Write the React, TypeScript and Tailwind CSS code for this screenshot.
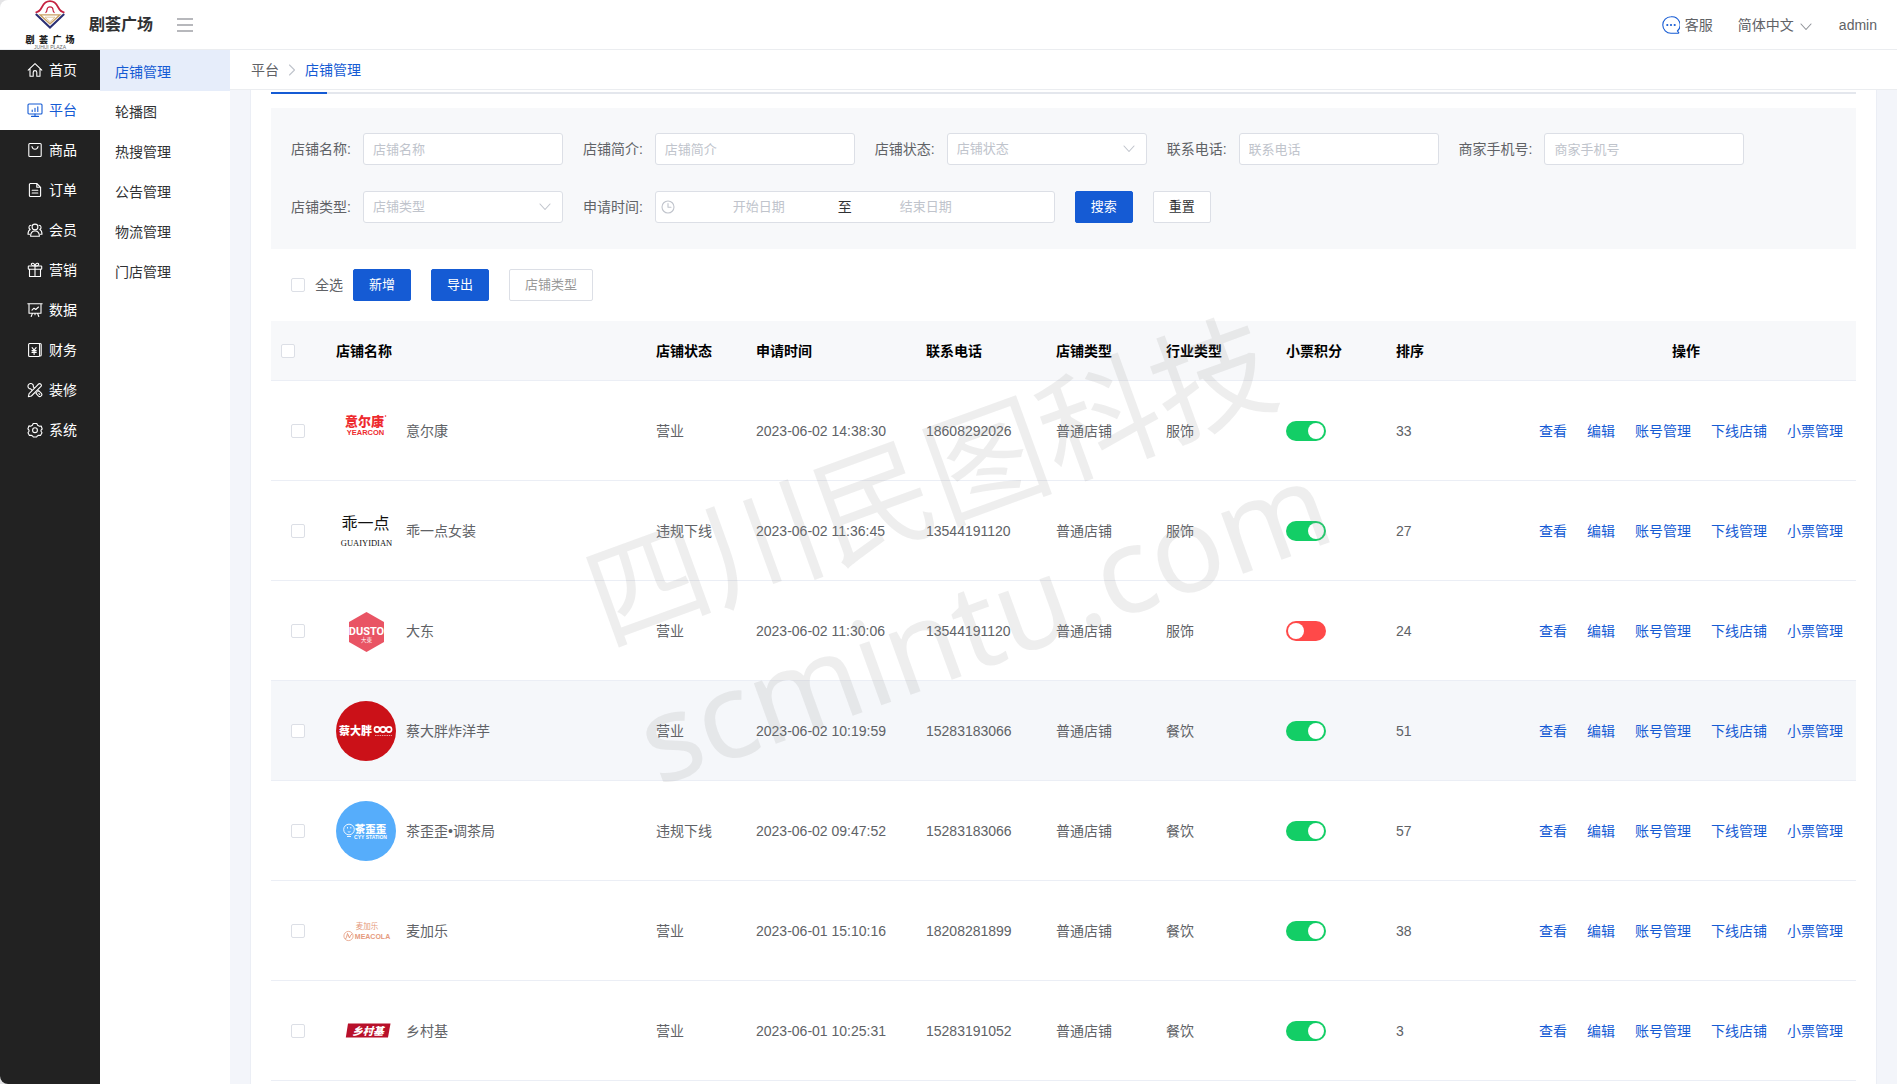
import React from "react";

type IconProps = { className?: string };

const stroke = {
  fill: "none",
  stroke: "currentColor",
  strokeWidth: 1.1,
  strokeLinecap: "round" as const,
  strokeLinejoin: "round" as const,
};

function NavSvg({ children }: { children: React.ReactNode }) {
  return (
    <svg viewBox="0 0 16 16" className="size-4 shrink-0" aria-hidden="true" {...stroke}>
      {children}
    </svg>
  );
}

const HomeIcon = () => (
  <NavSvg>
    <path d="M1.2 8.2 8 1.6l6.8 6.6M3 6.8V14.2h3.2V10.4a1.8 1.8 0 0 1 3.6 0v3.8H13V6.8" />
  </NavSvg>
);
const PlatformIcon = () => (
  <NavSvg>
    <rect x="1" y="2" width="14" height="10" rx="1" />
    <path d="M5.2 9.5V8M8 9.5V6.3M10.8 9.5V4.8M8 12v2.2M4.5 14.4h7" />
  </NavSvg>
);
const GoodsIcon = () => (
  <NavSvg>
    <rect x="1.8" y="1.5" width="12.4" height="13" rx="1" />
    <path d="M5 4.6c.4 1.7 1.6 2.6 3 2.6s2.6-.9 3-2.6" />
  </NavSvg>
);
const OrderIcon = () => (
  <NavSvg>
    <path d="M9.8 1.5H3.4a1 1 0 0 0-1 1v11a1 1 0 0 0 1 1h9.2a1 1 0 0 0 1-1V5.3zM9.8 1.5v3.8h3.8M5.2 8.2h5.6M5.2 11h5.6" />
  </NavSvg>
);
const MemberIcon = () => (
  <NavSvg>
    <circle cx="8" cy="5" r="2.9" />
    <path d="M3.6 14.3c0-3.5 1.8-5.3 4.4-5.3s4.4 1.8 4.4 5.3zM4 3.2a2.2 2.2 0 0 0-.8 4.2C1.6 8.2 1 9.8 1 12.2h1.5M12 3.2a2.2 2.2 0 0 1 .8 4.2c1.6.8 2.2 2.4 2.2 4.8h-1.5" />
  </NavSvg>
);
const GiftIcon = () => (
  <NavSvg>
    <rect x="1.3" y="4" width="13.4" height="3.3" rx=".5" />
    <path d="M2.5 7.3v7.2h11V7.3M8 4v10.500M8 4C6.500 4 4.300 3.400 4.300 2.200 4.300.7 7.500.8 8 4c.5-3.200 3.700-3.300 3.700-1.800C11.700 3.400 9.500 4 8 4" />
  </NavSvg>
);
const DataIcon = () => (
  <NavSvg>
    <path d="M.8 1.8h14.4M2 1.8v9.4h12V1.8M5 8.2l2-2 1.8 1.3L11.5 5M5.5 11.2l-1.3 3.3M10.5 11.2l1.3 3.3M8 11.2v1.5" />
  </NavSvg>
);
const FinanceIcon = () => (
  <NavSvg>
    <rect x="1.6" y="1.5" width="11" height="13" rx="1" />
    <path d="M3 1.5h10.200a1 1 0 0 1 1 1v10.500a1 1 0 0 1-1 1M5.100 5.600l2 2.600 2-2.600M5 8.600h4.200M5 10.400h4.200M7.100 8.400v4" />
  </NavSvg>
);
const DecorIcon = () => (
  <NavSvg>
    <path d="M9.800 3.800 11.600 2a1.400 1.400 0 0 1 2 0l.4.400a1.400 1.400 0 0 1 0 2L4.400 14l-3 .7.7-3zM6.300 4.800A2.700 2.700 0 1 0 3.700 6.900l1 1M6.300 4.800l1 1M9.800 10.500l-.8.900 2.300 2.500a2 2 0 0 0 2.900-2.800l-2.500-2.400-.9.800M11.900 11.700l.7.700" />
  </NavSvg>
);
const SystemIcon = () => (
  <NavSvg>
    <path d="M6.2 1.5h3.600l.8 1.800 1.900.9 1.700-.2 1 3-1.200 1.200 0 1 1 1.500-1.500 2.700-1.900-.2-1.200.7-.8 1.100H6.300l-.8-1.100-1.300-.7-1.800.2L1 10.700l1-1.500v-1L.9 6.900l1-3 1.700.3 1.800-.9z" />
    <circle cx="8" cy="8.2" r="2.4" />
  </NavSvg>
);

function Chevron({ className }: IconProps) {
  return (
    <svg viewBox="0 0 12 8" className={className} aria-hidden="true" {...stroke}>
      <path d="m1 1 5 5.500L11 1" />
    </svg>
  );
}

const nav = [
  { label: "首页", Icon: HomeIcon },
  { label: "平台", Icon: PlatformIcon, active: true },
  { label: "商品", Icon: GoodsIcon },
  { label: "订单", Icon: OrderIcon },
  { label: "会员", Icon: MemberIcon },
  { label: "营销", Icon: GiftIcon },
  { label: "数据", Icon: DataIcon },
  { label: "财务", Icon: FinanceIcon },
  { label: "装修", Icon: DecorIcon },
  { label: "系统", Icon: SystemIcon },
];

const subNav = ["店铺管理", "轮播图", "热搜管理", "公告管理", "物流管理", "门店管理"];

function BrandLogo() {
  return (
    <svg viewBox="0 0 52 50" className="h-[50px] w-[52px] shrink-0" role="img" aria-label="剧荟广场">
      <g fill="none">
        <path d="M11.500 12.500c3.500-.5 5-2.500 6.500-5.500C20 3 23 1.200 26 1.200S32 3 34 7c1.500 3 3 5 6.500 5.500" stroke="#c4203f" strokeWidth="1.700" />
        <path d="M21.500 12.800c1.400-1 1.500-1.800 1.500-3a3 3 0 0 1 6 0c0 1.200.1 2 1.500 3" stroke="#c4203f" strokeWidth="1.200" />
        <path d="M11.800 14 26 27.500 40.200 14" stroke="#2b2f73" strokeWidth="2" />
        <path d="M16 14.800h20L26 23.800z" stroke="#c9a063" strokeWidth="1.300" />
        <path d="M21 17.200h10l-5 4.500z" stroke="#d9bd8c" strokeWidth=".8" />
      </g>
      <g fill="#222" fontSize="9" fontWeight="900" textAnchor="middle">
        <text x="6" y="42.500">剧</text>
        <text x="19.500" y="42.500">荟</text>
        <text x="33" y="42.500">广</text>
        <text x="46" y="42.500">场</text>
      </g>
      <text x="26" y="48.500" textAnchor="middle" fontSize="5" fill="#666">JUHUI PLAZA</text>
    </svg>
  );
}

function StoreLogo({ id }: { id: string }) {
  return (
    <svg viewBox="0 0 60 60" className="size-[60px] shrink-0" role="img" aria-label={id} textAnchor="middle">
      {id === "yearcon" && (
        <g fill="#ee2a2e" fontWeight="900">
          <text x="28.500" y="25" fontSize="13">意尔康</text>
          <text x="29.500" y="34" fontSize="7.500">YEARCON</text>
          <circle cx="49.500" cy="15" r=".8" />
        </g>
      )}
      {id === "guaiyidian" && (
        <g fill="#111" fontFamily="'Liberation Serif','Noto Sans CJK SC',serif">
          <text x="29.500" y="28" fontSize="16">乖一点</text>
          <text x="30.500" y="45" fontSize="8.500">GUAIYIDIAN</text>
        </g>
      )}
      {id === "dusto" && (
        <g fill="#fff">
          <path d="M30.500 11 48 21v20L30.500 51 13 41V21z" fill="#e95464" />
          <text x="30.500" y="34" fontSize="11" fontWeight="700" fontFamily="'Liberation Sans Narrow',Roboto,sans-serif">DUSTO</text>
          <text x="30.500" y="41" fontSize="5.500">大東</text>
        </g>
      )}
      {id === "caidapang" && (
        <g fill="#fff">
          <circle cx="30" cy="30" r="30" fill="#cb1118" />
          <text x="19.500" y="34" fontSize="11" fontWeight="900">蔡大胖</text>
          <g fill="none" stroke="#fff" strokeWidth="1.600">
            <circle cx="41" cy="28.500" r="2.600" />
            <circle cx="47" cy="28.500" r="2.600" />
            <circle cx="53" cy="28.500" r="2.600" />
          </g>
          <path d="M39 34.500h17" stroke="#fff" strokeOpacity=".6" strokeDasharray="1.500 .8" />
        </g>
      )}
      {id === "cyy" && (
        <g fill="#fff">
          <circle cx="30" cy="30" r="30" fill="#56adfb" />
          <circle cx="13" cy="28.500" r="5.300" fill="none" stroke="#fff" strokeWidth=".9" />
          <path d="M11.500 26v1.500M14.800 26v1.500M11.800 30.500c.8.700 1.800.7 2.600 0M11 35.500h4" fill="none" stroke="#fff" strokeWidth=".9" />
          <text x="34.500" y="32" fontSize="10.500" fontWeight="900">茶歪歪</text>
          <text x="34.500" y="37.500" fontSize="5" fontWeight="700">CYY STATION</text>
        </g>
      )}
      {id === "meacola" && (
        <g fill="#e59a7d">
          <text x="31" y="28" fontSize="7.500">麦加乐</text>
          <circle cx="12.500" cy="35" r="4.600" fill="none" stroke="#e59a7d" strokeWidth=".8" />
          <path d="M9.500 38c1.500-2 1.500-4 2-5.500l2 4.500c.5-1.500 1-3 2.500-4" fill="none" stroke="#e59a7d" strokeWidth="1" />
          <text x="36.500" y="37.500" fontSize="7" fontWeight="700">MEACOLA</text>
        </g>
      )}
      {id === "xiangcunji" && (
        <g fill="#fff">
          <path d="M12 22.500h42.500L52 36.500H9.800z" fill="#b8102a" />
          <text x="32" y="33.500" fontSize="10.500" fontWeight="900" fontStyle="italic">乡村基</text>
        </g>
      )}
    </svg>
  );
}

const rows = [
  { logo: "yearcon", name: "意尔康", status: "营业", time: "2023-06-02 14:38:30", phone: "18608292026", trade: "服饰", on: true, sort: 33 },
  { logo: "guaiyidian", name: "乖一点女装", status: "违规下线", time: "2023-06-02 11:36:45", phone: "13544191120", trade: "服饰", on: true, sort: 27 },
  { logo: "dusto", name: "大东", status: "营业", time: "2023-06-02 11:30:06", phone: "13544191120", trade: "服饰", on: false, sort: 24 },
  { logo: "caidapang", name: "蔡大胖炸洋芋", status: "营业", time: "2023-06-02 10:19:59", phone: "15283183066", trade: "餐饮", on: true, sort: 51, hover: true },
  { logo: "cyy", name: "茶歪歪•调茶局", status: "违规下线", time: "2023-06-02 09:47:52", phone: "15283183066", trade: "餐饮", on: true, sort: 57 },
  { logo: "meacola", name: "麦加乐", status: "营业", time: "2023-06-01 15:10:16", phone: "18208281899", trade: "餐饮", on: true, sort: 38 },
  { logo: "xiangcunji", name: "乡村基", status: "营业", time: "2023-06-01 10:25:31", phone: "15283191052", trade: "餐饮", on: true, sort: 3 },
];

const boxClass = "block size-[14px] shrink-0 appearance-none rounded-[2px] border border-[#dcdfe6] bg-white checked:bg-[#155bd4]";
const fieldClass = "h-8 w-[200px] appearance-none rounded-[3px] border border-[#dcdfe6] bg-white px-[9px] text-[13px] text-[#606266] outline-none placeholder:text-[#c0c4cc]";

function Field({ label, id, children }: { label: string; id: string; children: React.ReactNode }) {
  return (
    <div className="flex items-center">
      <label htmlFor={id} className="pr-3">{label}:</label>
      {children}
    </div>
  );
}

function TextField({ label, id }: { label: string; id: string }) {
  return (
    <Field label={label} id={id}>
      <input id={id} type="text" placeholder={label} className={fieldClass} />
    </Field>
  );
}

function SelectField({ label, id }: { label: string; id: string }) {
  return (
    <Field label={label} id={id}>
      <div className="relative">
        <select id={id} defaultValue="" className={fieldClass + " text-[#c0c4cc]!"}>
          <option value="">{label}</option>
        </select>
        <Chevron className="pointer-events-none absolute top-3 right-3 h-2 w-3 text-[#c0c4cc]" />
      </div>
    </Field>
  );
}

const primaryBtn = "h-8 rounded-[2px] border border-[#155bd4] bg-[#155bd4] px-[15px] text-[13px] text-white";
const plainBtn = "h-8 rounded-[2px] border border-[#dcdfe6] bg-white px-[15px] text-[13px]";

export default function App() {
  return (
    <div className="h-screen bg-[#e4e4e6]">
      <div className="flex h-full flex-col overflow-hidden rounded-l-lg bg-white font-['Liberation_Sans','Noto_Sans_CJK_SC',sans-serif] text-sm text-[#606266]">
        <header className="flex h-[50px] shrink-0 items-center border-b border-[#ebedf0] pr-5 pl-6">
          <BrandLogo />
          <h1 className="ml-[13px] text-base font-bold text-[#303133]">剧荟广场</h1>
          <button type="button" aria-label="菜单" className="ml-6 text-[#a0a1a6]">
            <svg viewBox="0 0 16 14" className="h-[14px] w-4" fill="none" stroke="currentColor" strokeWidth="1.300">
              <path d="M0 1h16M0 7h16M0 13h16" />
            </svg>
          </button>
          <div className="ml-auto flex items-center">
            <a href="#service" className="flex items-center gap-[5px]">
              <svg viewBox="0 0 18 18" className="size-[18px] text-[#155bd4]" aria-hidden="true" {...stroke}>
                <path d="M9 .8a8.200 8.200 0 1 0 0 16.400h7.300c.6 0 .7-.4.300-.8l-1.200-1.400A8.200 8.200 0 0 0 9 .8z" />
                <g fill="currentColor" stroke="none">
                  <circle cx="5.300" cy="9" r="1.100" />
                  <circle cx="9" cy="9" r="1.100" />
                  <circle cx="12.700" cy="9" r="1.100" />
                </g>
              </svg>
              客服
            </a>
            <button type="button" className="ml-[25px] flex items-center gap-[6px]">
              简体中文
              <Chevron className="mt-1 h-2 w-3 text-[#909399]" />
            </button>
            <a href="#admin" className="ml-[27px]">admin</a>
          </div>
        </header>

        <div className="flex min-h-0 flex-1">
          <nav className="w-[100px] shrink-0 bg-[#222] text-white">
            {nav.map(({ label, Icon, active }) => (
              <a
                key={label}
                href={"#" + label}
                className={"flex h-10 items-center gap-[6px] pl-[27px] " + (active ? "bg-white text-[#155bd4]" : "")}
              >
                <Icon />
                {label}
              </a>
            ))}
          </nav>

          <nav className="w-[130px] shrink-0 border-t border-[#e6edfa] bg-white text-[#303133]">
            {subNav.map((label, i) => (
              <a
                key={label}
                href={"#" + label}
                className={"flex h-10 items-center pt-[2px] pl-[15px] " + (i === 0 ? "bg-[#e6edfa] text-[#155bd4]" : "")}
              >
                {label}
              </a>
            ))}
          </nav>

          <div className="flex min-w-0 flex-1 flex-col bg-[#f3f5fa]">
            <div className="flex h-10 shrink-0 items-center border-b border-[#ebedf0] bg-white pl-[21px]">
              <a href="#platform">平台</a>
              <svg viewBox="0 0 8 12" className="mx-[9px] h-3 w-2 text-[#c0c4cc]" aria-hidden="true" {...stroke}>
                <path d="m1.500 1 5 5-5 5" />
              </svg>
              <a href="#shops" className="text-[#155bd4]">店铺管理</a>
            </div>

            <main className="relative mr-5 ml-5 min-h-0 flex-1 overflow-hidden border-x border-[#ebeef5] bg-white px-5 pt-[2px]">
              <div className="h-[2px] bg-[#e4e7ed]">
                <div className="h-full w-14 bg-[#155bd4]" />
              </div>

              <form className="mt-[14px] flex flex-wrap gap-x-5 gap-y-[26px] bg-[#f7f8fa] px-5 pt-[25px] pb-[26px]">
                <TextField label="店铺名称" id="shop-name" />
                <TextField label="店铺简介" id="shop-intro" />
                <SelectField label="店铺状态" id="shop-status" />
                <TextField label="联系电话" id="phone" />
                <TextField label="商家手机号" id="mobile" />
                <SelectField label="店铺类型" id="shop-type" />
                <Field label="申请时间" id="start-date">
                  <div className="flex h-8 w-[400px] items-center rounded-[3px] border border-[#dcdfe6] bg-white pl-[5px] text-[13px]">
                    <svg viewBox="0 0 14 14" className="mr-[10px] size-[14px] shrink-0 text-[#c0c4cc]" aria-hidden="true" {...stroke}>
                      <circle cx="7" cy="7" r="6" />
                      <path d="M7 3.500V7.300h3" />
                    </svg>
                    <input id="start-date" type="text" placeholder="开始日期" className="w-[148px] text-center outline-none placeholder:text-[#c0c4cc]" />
                    <span className="w-6 text-center text-sm text-[#303133]">至</span>
                    <input type="text" aria-label="结束日期" placeholder="结束日期" className="w-[138px] text-center outline-none placeholder:text-[#c0c4cc]" />
                  </div>
                </Field>
                <button type="button" className={primaryBtn}>搜索</button>
                <button type="reset" className={plainBtn + " text-[#303133]"}>重置</button>
              </form>

              <div className="mt-5 flex items-center pl-5">
                <label className="flex items-center gap-[10px]">
                  <input type="checkbox" className={boxClass} />
                  全选
                </label>
                <div className="ml-[10px] flex gap-5">
                  <button type="button" className={primaryBtn}>新增</button>
                  <button type="button" className={primaryBtn}>导出</button>
                  <button type="button" disabled className={plainBtn + " text-[#999]"}>店铺类型</button>
                </div>
              </div>

              <table className="mt-5 w-full table-fixed border-separate border-spacing-0 text-left [&_td]:border-b [&_td]:border-[#ebeef5] [&_th]:border-b [&_th]:border-[#ebeef5]">
                <colgroup>
                  <col className="w-[55px]" />
                  <col />
                  <col className="w-[100px]" />
                  <col className="w-[170px]" />
                  <col className="w-[130px]" />
                  <col className="w-[110px]" />
                  <col className="w-[120px]" />
                  <col className="w-[110px]" />
                  <col className="w-[130px]" />
                  <col className="w-[340px]" />
                </colgroup>
                <thead>
                  <tr className="h-[60px] bg-[#f7f8fa] text-black">
                    <th className="px-[10px]">
                      <input type="checkbox" aria-label="全选" className={boxClass} />
                    </th>
                    {["店铺名称", "店铺状态", "申请时间", "联系电话", "店铺类型", "行业类型", "小票积分", "排序"].map((h) => (
                      <th key={h} className="px-[10px] font-bold">{h}</th>
                    ))}
                    <th className="px-[10px] text-center font-bold">操作</th>
                  </tr>
                </thead>
                <tbody>
                  {rows.map((r) => (
                    <tr key={r.name} className={"h-[100px] " + (r.hover ? "bg-[#f5f7fa]" : "")}>
                      <td className="pl-5">
                        <input type="checkbox" aria-label={"选择" + r.name} className={boxClass} />
                      </td>
                      <td className="px-[10px]">
                        <div className="flex items-center gap-[10px]">
                          <StoreLogo id={r.logo} />
                          {r.name}
                        </div>
                      </td>
                      <td className="px-[10px]">{r.status}</td>
                      <td className="px-[10px]">{r.time}</td>
                      <td className="px-[10px]">{r.phone}</td>
                      <td className="px-[10px]">普通店铺</td>
                      <td className="px-[10px]">{r.trade}</td>
                      <td className="px-[10px]">
                        <label className="relative block h-5 w-10">
                          <input
                            type="checkbox"
                            role="switch"
                            aria-label={r.name + "小票积分"}
                            defaultChecked={r.on}
                            className="peer block h-5 w-10 appearance-none rounded-full bg-[#ff4949] checked:bg-[#13ce66]"
                          />
                          <span className="absolute top-[2px] left-[2px] size-4 rounded-full bg-white peer-checked:left-[22px]" />
                        </label>
                      </td>
                      <td className="px-[10px]">{r.sort}</td>
                      <td>
                        <div className="flex justify-center gap-5 pl-[10px] text-[#155bd4]">
                          <button type="button">查看</button>
                          <button type="button">编辑</button>
                          <button type="button">账号管理</button>
                          <button type="button">{r.status === "营业" ? "下线店铺" : "下线管理"}</button>
                          <button type="button">小票管理</button>
                        </div>
                      </td>
                    </tr>
                  ))}
                </tbody>
              </table>

              <div className="pointer-events-none absolute top-[309px] left-[344px] -rotate-[20deg] font-['Noto_Sans','Noto_Sans_CJK_SC',sans-serif] text-[120px] leading-[150px] whitespace-nowrap text-[rgba(150,150,150,0.16)]" aria-hidden="true">
                <p>四川民图科技</p>
                <p>scmintu.com</p>
              </div>
            </main>
          </div>
        </div>
      </div>
    </div>
  );
}
